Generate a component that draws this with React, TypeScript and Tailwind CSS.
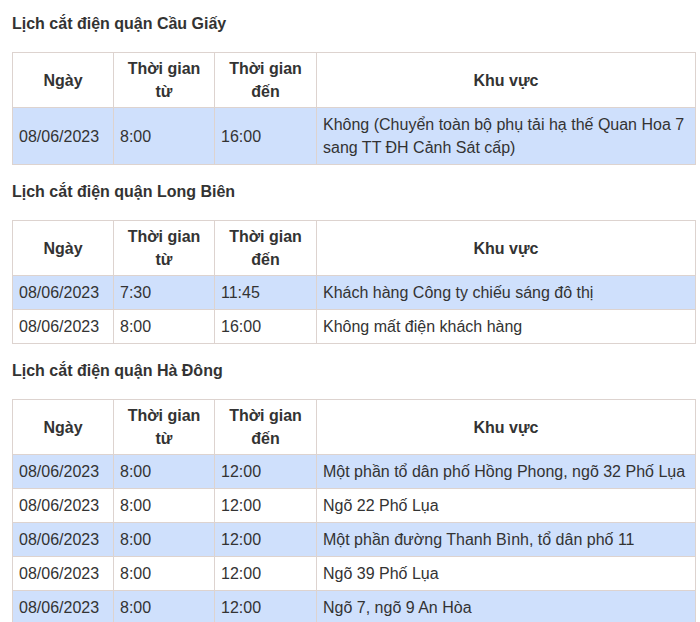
const sections = [
  { title: "Lịch cắt điện quận Cầu Giấy", rows: [["08/06/2023","8:00","16:00","Không (Chuyển toàn bộ phụ tải hạ thế Quan Hoa 7 sang TT ĐH Cảnh Sát cấp)"]] },
  { title: "Lịch cắt điện quận Long Biên", rows: [["08/06/2023","7:30","11:45","Khách hàng Công ty chiếu sáng đô thị"],["08/06/2023","8:00","16:00","Không mất điện khách hàng"]] },
  { title: "Lịch cắt điện quận Hà Đông", rows: [
    ["08/06/2023","8:00","12:00","Một phần tổ dân phố Hồng Phong, ngõ 32 Phố Lụa"],
    ["08/06/2023","8:00","12:00","Ngõ 22 Phố Lụa"],
    ["08/06/2023","8:00","12:00","Một phần đường Thanh Bình, tổ dân phố 11"],
    ["08/06/2023","8:00","12:00","Ngõ 39 Phố Lụa"],
    ["08/06/2023","8:00","12:00","Ngõ 7, ngõ 9 An Hòa"]] },
];

export default function App() {
  return (
    <div className="w-[700px] bg-white text-[#333] text-[16px] leading-[23px] pl-[12px] pr-[4px] pt-[12px]" style={{ fontFamily: '"Liberation Sans", Arial, sans-serif' }}>
      {sections.map((s, i) => (
        <div key={i}>
          <div className={`font-bold mb-[17px] ${i > 0 ? "mt-[15px]" : ""}`}>{s.title}</div>
          <table className="w-[684px] border-collapse table-fixed">
            <colgroup>
              <col className="w-[101px]" /><col className="w-[101px]" /><col className="w-[102px]" /><col />
            </colgroup>
            <thead>
              <tr className="h-[55px]">
                {["Ngày", "Thời gian từ", "Thời gian đến", "Khu vực"].map((h, j) => (
                  <th key={j} className="border border-[#ddd3cf] px-[6px] py-[4px] font-bold text-center">{h}</th>
                ))}
              </tr>
            </thead>
            <tbody>
              {s.rows.map((r, k) => (
                <tr key={k} className={k % 2 === 0 ? "bg-[#cfe0fc]" : "bg-white"}>
                  {r.map((c, j) => (
                    <td key={j} className="border border-[#ddd3cf] px-[6px] py-[5px] align-middle">{c}</td>
                  ))}
                </tr>
              ))}
            </tbody>
          </table>
        </div>
      ))}
    </div>
  );
}
